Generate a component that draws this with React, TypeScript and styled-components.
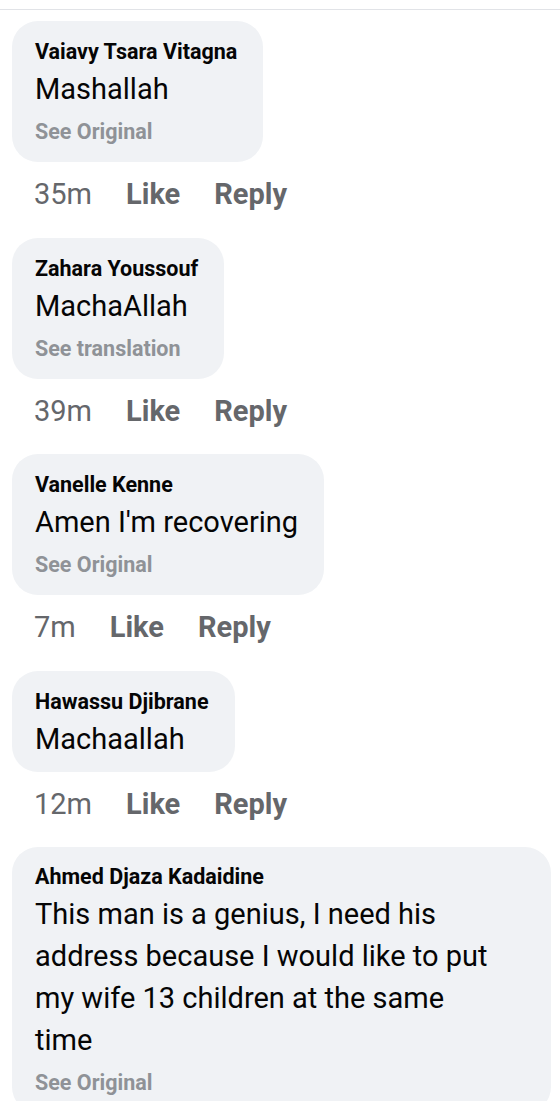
import styled, { createGlobalStyle } from 'styled-components'

const GlobalStyle = createGlobalStyle`
  body {
    margin: 0;
    background: #ffffff;
    font-family: Roboto, "Liberation Sans", Arial, sans-serif;
  }
`;

const Page = styled.div`
  padding-top: 9px;
`;

const TopRule = styled.div`
  height: 1px;
  background: #e1e3e7;
`;

const List = styled.div`
  padding: 11px 9px 0 12px;
`;

const Comment = styled.div`
  display: flex;
  flex-direction: column;
  align-items: flex-start;
`;

const Bubble = styled.div<{ $footer: boolean; $long: boolean }>`
  max-width: 539px;
  width: ${(p) => (p.$long ? '539px' : 'auto')};
  box-sizing: border-box;
  background: #f0f2f5;
  border-radius: 26px;
  padding: ${(p) => (p.$long ? '16px' : '17px')} ${(p) => (p.$long ? '52px' : '26px')} ${(p) => (p.$footer ? '16px' : '12px')} 23px;
`;

const Name = styled.div`
  font-size: 21.5px;
  line-height: 28px;
  font-weight: 700;
  color: #050505;
  margin-bottom: 2px;
`;

const Message = styled.div`
  font-size: 29px;
  line-height: 42px;
  color: #050505;
`;

const SeeOriginal = styled.div`
  font-size: 21.5px;
  line-height: 28px;
  font-weight: 700;
  color: #8f9297;
  margin-top: 8px;
`;

const Actions = styled.div`
  display: flex;
  gap: 34px;
  padding-left: 22px;
  margin: 12px 0 23.5px;
  font-size: 29px;
  line-height: 40px;
  color: #65676b;
`;

const Time = styled.span``;

const Action = styled.span`
  font-weight: 700;
`;

type Item = { name: string; text: string; footer?: string; time: string };

const comments: Item[] = [
  { name: 'Vaiavy Tsara Vitagna', text: 'Mashallah', footer: 'See Original', time: '35m' },
  { name: 'Zahara Youssouf', text: 'MachaAllah', footer: 'See translation', time: '39m' },
  { name: 'Vanelle Kenne', text: "Amen I'm recovering", footer: 'See Original', time: '7m' },
  { name: 'Hawassu Djibrane', text: 'Machaallah', time: '12m' },
  {
    name: 'Ahmed Djaza Kadaidine',
    text: 'This man is a genius, I need his address because I would like to put my wife 13 children at the same time',
    footer: 'See Original',
    time: '',
  },
];

export default function App() {
  return (
    <>
      <GlobalStyle />
      <Page>
        <TopRule />
        <List>
          {comments.map((c) => (
            <Comment key={c.name}>
              <Bubble $footer={!!c.footer} $long={c.text.length > 60}>
                <Name>{c.name}</Name>
                <Message>{c.text}</Message>
                {c.footer && <SeeOriginal>{c.footer}</SeeOriginal>}
              </Bubble>
              {c.time && (
                <Actions>
                  <Time>{c.time}</Time>
                  <Action>Like</Action>
                  <Action>Reply</Action>
                </Actions>
              )}
            </Comment>
          ))}
        </List>
      </Page>
    </>
  )
}
